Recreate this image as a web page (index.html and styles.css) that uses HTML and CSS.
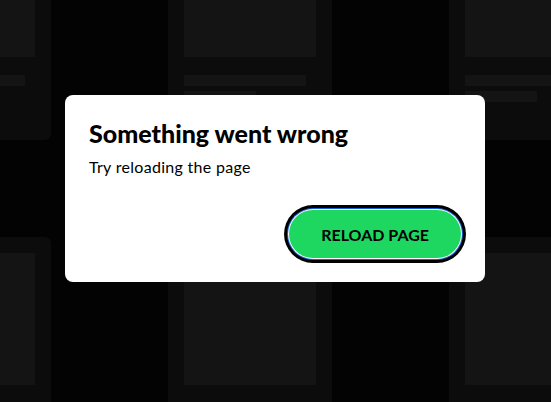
FILE: index.html
```html
<!DOCTYPE html>
<html lang="en">
<head>
<meta charset="utf-8">
<title>Something went wrong</title>
<link rel="stylesheet" href="styles.css">
</head>
<body>

<!-- placeholder cards while the feed loads -->
<div class="feed">
  <div class="card"><div class="cover"></div><div class="line"></div><div class="line short"></div></div>
  <div class="card"><div class="cover"></div><div class="line"></div><div class="line short"></div></div>
  <div class="card"><div class="cover"></div><div class="line"></div><div class="line short"></div></div>
  <div class="card"><div class="cover"></div><div class="line"></div><div class="line short"></div></div>
  <div class="card"><div class="cover"></div><div class="line"></div><div class="line short"></div></div>
  <div class="card"><div class="cover"></div><div class="line"></div><div class="line short"></div></div>
</div>

<div class="dialog">
  <h2 class="dialog-title">Something went wrong</h2>
  <p class="dialog-text">Try reloading the page</p>
  <div class="dialog-actions">
    <button class="btn-reload" type="button" onclick="location.reload();">RELOAD PAGE</button>
  </div>
</div>

</body>
</html>
```

FILE: styles.css
```css
html, body {
    margin: 0;
    padding: 0;
}
body {
    width: 551px;
    height: 402px;
    overflow: hidden;
    background: #030303;
    font-family: Lato, "Liberation Sans", sans-serif;
    color: #000;
}

/* skeleton grid behind the dialog */
.feed {
    display: grid;
    grid-template-columns: repeat(3, 164px);
    column-gap: 117px;
    row-gap: 97px;
    margin: -91px 0 0 -113px;
}
.card {
    background: #0c0c0c;
    border-radius: 6px;
    padding: 16px 16px 38px 16px;
}
.cover {
    height: 132px;
    background: #141414;
}
.line {
    height: 11px;
    width: 122px;
    margin-top: 18px;
    background: #141414;
}
.line.short {
    width: 72px;
    margin-top: 5px;
}

/* error dialog */
.dialog {
    position: absolute;
    left: 65px;
    top: 95px;
    width: 372px;
    padding: 24px;
    background: #fff;
    border-radius: 8px;
}
.dialog-title {
    margin: 0;
    font-size: 25px;
    font-weight: 900;
    line-height: 29px;
}
.dialog-text {
    margin: 8px 0 0 0;
    font-size: 16px;
    line-height: 22px;
    letter-spacing: 0.3px;
}
.dialog-actions {
    display: flex;
    justify-content: flex-end;
    margin-top: 32px;
}
.btn-reload {
    height: 48px;
    padding: 0 32px;
    border: 0;
    border-radius: 24px;
    background: #1ed760;
    color: #000;
    font-family: Lato, "Liberation Sans", sans-serif;
    font-size: 16px;
    font-weight: bold;
    cursor: pointer;
    /* keyboard focus ring */
    box-shadow: 0 0 0 1px #fff, 0 0 0 2px #1d5fd6, 0 0 0 5px #000;
}
```
